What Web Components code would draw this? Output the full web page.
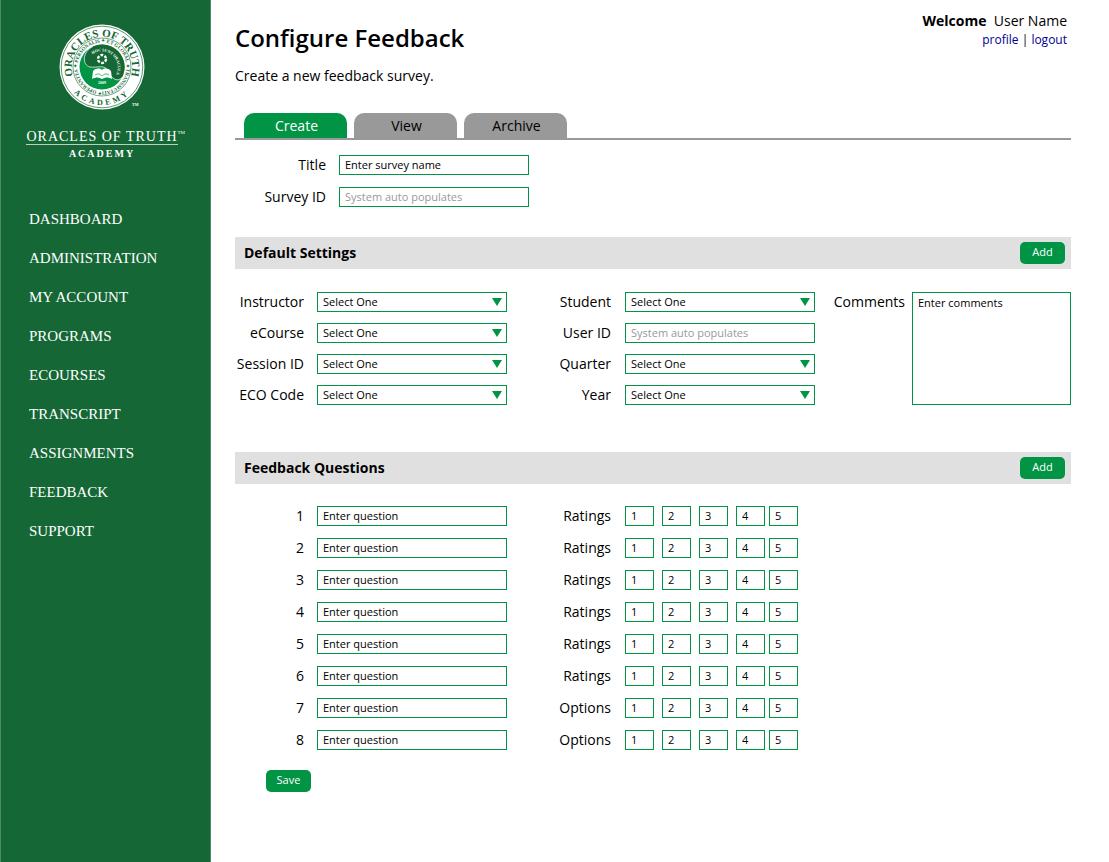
<!DOCTYPE html>
<html lang="en">
<head>
<meta charset="utf-8">
<meta name="viewport" content="width=device-width, initial-scale=1">
<title>Configure Feedback</title>
<style>
  :root {
    --green: #009444;
    --dark-green: #156735;
    --grey: #999;
    --bar: #e0e0e0;
  }
  body { margin: 0; background: #fff; color: #000; font: 14px/20px "Open Sans", "Noto Sans", sans-serif; }
</style>
</head>
<body>
<feedback-app></feedback-app>

<script>
const define = (name, render, setup) => customElements.define(name, class extends HTMLElement {
  connectedCallback() {
    if (this.shadowRoot) return;
    const root = this.attachShadow({ mode: "open" });
    root.innerHTML = render(this);
    if (setup) setup(root, this);
  }
});

const controlStyle = `
  input, select, textarea {
    box-sizing: border-box; margin: 0; width: 100%; height: 20px; padding: 0 5px;
    border: 1px solid var(--green); border-radius: 0; background: #fff; color: #000;
    font: 11px/18px "Open Sans", "Noto Sans", sans-serif; appearance: none; outline: none; display: block;
  }
  input { padding-bottom: 2px; }
  input:focus-visible, select:focus-visible, textarea:focus-visible { box-shadow: 0 0 0 2px #00944455; }
  ::placeholder { color: #000; opacity: 1; }
  :disabled { background: #fff; }
  :disabled::placeholder { color: #999; }
`;

define("academy-emblem", () => `
  <style>
    :host { display: block; width: 86px; height: 86px; }
    svg { display: block; overflow: visible; }
    text { font-family: "Liberation Serif", serif; font-weight: bold; fill: var(--dark-green); }
  </style>
  <svg width="86" height="86" viewBox="-43 -43 86 86" role="img" aria-label="Oracles of Truth Academy seal">
    <defs>
      <path id="top" d="M-28.5 10 A30.2 30.2 0 1 1 28.5 10"/>
      <path id="low" d="M-38 0 A38 38 0 0 0 38 0"/>
      <path id="ring" d="M0 24.5 A24.5 24.5 0 0 1 0 -24.5 A24.5 24.5 0 0 1 0 24.5"/>
      <path id="inner" d="M-14 -8 A16 16 0 1 1 10 12.5"/>
    </defs>
    <circle r="42.5" fill="#fff"/>
    <circle r="40.8" fill="none" stroke="#156735" stroke-width=".7"/>
    <circle r="29" fill="none" stroke="#156735" stroke-width=".6"/>
    <circle r="22.5" fill="#009444"/>
    <path fill="#156735" d="M-9 -20.6 A22.5 22.5 0 0 1 20 10.5 C15 16 9 11 6 4 C3 -3 -5 1 -12 0 C-20 -2 -20 -15 -9 -20.6Z"/>
    <path fill="none" stroke="#fff" stroke-width=".7" d="M-9 -20.6 C-20 -15 -20 -2 -12 0 C-5 1 3 -3 6 4 C9 11 15 16 20 10.5"/>
    <circle cy="-8" r="4" fill="none" stroke="#fff" stroke-width="2.4" stroke-dasharray="2.8 1.4"/>
    <path fill="#fff" d="M-9 4 C-6 1 -2 1 0 3 C2 1 6 1 9 4 L10 12 C6 10 3 10 0 12 C-3 10 -6 10 -10 12Z"/>
    <path stroke="#009444" stroke-width=".7" fill="none" d="M-7 8 C-4 6 -2 7 0 9 C2 7 4 6 7 8"/>
    <text font-size="11" text-anchor="middle"><textPath href="#top" startOffset="50%">ORACLES OF TRUTH</textPath></text>
    <text font-size="8" text-anchor="middle" letter-spacing="3"><textPath href="#low" startOffset="50%">ACADEMY</textPath></text>
    <text font-size="5"><textPath href="#ring">✦ OPERANTES ✦ PERSONALIS ✦ ET GLOBAL ✦ TRANSMUTATIO</textPath></text>
    <text font-size="4" text-anchor="middle" style="fill:#fff"><textPath href="#inner" startOffset="50%">HOC SUNT ORACULA</textPath></text>
    <text x="0" y="17" font-size="4" text-anchor="middle" style="fill:#fff">2009</text>
    <text x="30" y="39" font-size="4" style="fill:#fff">TM</text>
  </svg>`);

define("academy-logo", () => `
  <style>
    :host { display: flex; flex-direction: column; align-items: center; color: #fff;
      font-family: "Liberation Serif", serif; }
    .name { position: relative; margin-top: 19px; border-bottom: 1px solid #b9d1c2; font-size: 14px; line-height: 15px; letter-spacing: 1px; white-space: nowrap; }
    sup { position: absolute; left: 100%; top: 0; font-size: 5px; line-height: 8px; letter-spacing: 0; }
    .sub { margin-top: 3px; font-size: 10px; line-height: 12px; letter-spacing: 2px; font-weight: bold; }
  </style>
  <academy-emblem></academy-emblem>
  <div class="name">ORACLES OF TRUTH<sup>TM</sup></div>
  <div class="sub">ACADEMY</div>`);

define("side-nav", () => `
  <style>
    :host { display: block; box-sizing: border-box; width: 211px; padding: 24px 0; background: var(--dark-green);
      border: solid #4b8c64; border-width: 0 1px; }
    academy-logo { padding-right: 7px; }
    nav { display: flex; flex-direction: column; gap: 19px; margin-top: 49px; padding-left: 28px; }
    a { color: #fff; text-decoration: none; font: 15px/20px "Liberation Serif", serif; align-self: flex-start; }
    a:hover { text-decoration: underline; }
  </style>
  <academy-logo></academy-logo>
  <nav aria-label="Main">${["DASHBOARD","ADMINISTRATION","MY ACCOUNT","PROGRAMS","ECOURSES","TRANSCRIPT","ASSIGNMENTS","FEEDBACK","SUPPORT"]
    .map(t => `<a href="#${t.toLowerCase().replace(" ", "-")}">${t}</a>`).join("")}</nav>`);

define("page-header", () => `
  <style>
    :host { display: flex; justify-content: space-between; align-items: flex-start; }
    h1 { margin: 22px 0 0; font-size: 24px; line-height: 32px; font-weight: 600; }
    p { margin: 12px 0 0; }
    .user { padding: 11px 4px 0 0; text-align: right; white-space: pre; }
    .links { font-size: 12px; line-height: 18px; }
    a { color: #00008f; text-decoration: none; }
  </style>
  <div><h1><slot name="title"></slot></h1><p><slot></slot></p></div>
  <div class="user"><div><b>Welcome</b>  User Name</div><div class="links"><a href="#profile">profile</a> | <a href="#logout">logout</a></div></div>`);

define("tab-bar", () => `
  <style>
    :host { display: flex; gap: 7px; padding-left: 9px; border-bottom: 2px solid var(--grey); }
    button { width: 103px; height: 25px; margin: 0; padding: 0 0 0 2px; border: 0; border-radius: 10px 10px 0 0;
      background: var(--grey); color: #000; font: inherit; line-height: 25px; }
    button[aria-selected=true] { background: var(--green); color: #fff; }
  </style>
  <button role="tab" aria-selected="true">Create</button>
  <button role="tab" aria-selected="false">View</button>
  <button role="tab" aria-selected="false">Archive</button>`,
  (root, host) => {
    host.setAttribute("role", "tablist");
    root.addEventListener("click", e => {
      const tab = e.target.closest("button");
      if (tab) root.querySelectorAll("button").forEach(b => b.setAttribute("aria-selected", b === tab));
    });
  });

define("action-button", () => `
  <style>
    :host { display: block; }
    button { display: block; width: 45px; height: 22px; padding: 0 0 2px; border: 0; border-radius: 5px;
      background: var(--green); color: #fff; font: inherit; font-size: 11px; line-height: 20px; font-weight: normal; }
    button:hover { background: #007c39; }
  </style>
  <button type="button"><slot></slot></button>`);

define("section-bar", () => `
  <style>
    :host { display: flex; justify-content: space-between; align-items: center; height: 32px; padding: 0 6px 0 9px; background: var(--bar); }
    h2 { margin: 0; font-size: 14px; line-height: 20px; }
  </style>
  <h2><slot></slot></h2><action-button>Add</action-button>`);

define("form-field", host => {
  const type = host.getAttribute("type") || "text";
  const hint = host.getAttribute("hint") || "";
  const control = {
    text: `<input id="c" type="text" placeholder="${hint}">`,
    auto: `<input id="c" type="text" placeholder="${hint}" disabled>`,
    select: `<select id="c"><option>Select One</option></select><svg width="10" height="8" aria-hidden="true"><path fill="#009444" d="M0 0H10L5 8Z"/></svg>`,
    area: `<textarea id="c" placeholder="${hint}"></textarea>`
  }[type];
  return `
  <style>
    :host { display: grid; grid-template-columns: var(--label, 69px) minmax(0, 1fr); column-gap: var(--gap, 13px); }
    label { display: flex; justify-content: flex-end; line-height: 20px; white-space: nowrap; font-weight: var(--label-weight, 500); }
    .box { position: relative; }
    svg { position: absolute; right: 5px; top: 6px; pointer-events: none; }
    ${controlStyle}
    textarea { height: 113px; padding-top: 1px; resize: none; }
  </style>
  <label for="c"><slot></slot></label><div class="box">${control}</div>`;
});

define("rating-group", () => `
  <style>
    :host { display: grid; grid-template-columns: var(--label, 104px) 1fr; column-gap: var(--gap, 14px); }
    .label { text-align: right; line-height: 20px; }
    .boxes { display: grid; grid-template-columns: 37px 37px 37px 33px 29px; }
    ${controlStyle}
    input { width: 29px; }
  </style>
  <span class="label" id="l"><slot></slot></span>
  <div class="boxes" role="group" aria-labelledby="l">${[1,2,3,4,5].map(n => `<input type="text" aria-label="Choice ${n}" value="${n}">`).join("")}</div>`);

const columns = `
  .columns { display: grid; grid-template-columns: 272fr 308fr 256fr; }
  .col { display: grid; align-content: start; }
  .mid { --label: 104px; --gap: 14px; --label-weight: 400; }
`;

define("default-settings", () => `
  <style>
    :host { display: block; }
    ${columns}
    .columns { padding-top: 23px; }
    .col { row-gap: 11px; }
    .end { --label: 90px; --gap: 7px; --label-weight: 400; }
  </style>
  <section-bar>Default Settings</section-bar>
  <div class="columns">
    <div class="col">
      <form-field type="select">Instructor</form-field>
      <form-field type="select">eCourse</form-field>
      <form-field type="select">Session ID</form-field>
      <form-field type="select">ECO Code</form-field>
    </div>
    <div class="col mid">
      <form-field type="select">Student</form-field>
      <form-field type="auto" hint="System auto populates">User ID</form-field>
      <form-field type="select">Quarter</form-field>
      <form-field type="select">Year</form-field>
    </div>
    <div class="col end"><form-field type="area" hint="Enter comments">Comments</form-field></div>
  </div>`);

define("feedback-questions", () => `
  <style>
    :host { display: block; }
    ${columns}
    .columns { padding-top: 22px; }
    .col { row-gap: 12px; }
  </style>
  <section-bar>Feedback Questions</section-bar>
  <div class="columns">
    <div class="col">${[1,2,3,4,5,6,7,8].map(n => `<form-field hint="Enter question">${n}</form-field>`).join("")}</div>
    <div class="col mid">${[1,2,3,4,5,6,7,8].map(n => `<rating-group>${n > 6 ? "Options" : "Ratings"}</rating-group>`).join("")}</div>
  </div>`);

define("feedback-app", () => `
  <style>
    :host { display: flex; min-height: 100vh; }
    side-nav { flex: none; }
    main { flex: 1; min-width: 0; padding: 0 38px 24px 24px; }
    tab-bar { margin-top: 27px; }
    .survey { display: grid; row-gap: 12px; width: 294px; margin-top: 15px; --label: 91px; }
    default-settings { margin-top: 30px; }
    feedback-questions { margin-top: 47px; }
    .save { margin: 20px 0 0 31px; }
  </style>
  <side-nav></side-nav>
  <main>
    <page-header><span slot="title">Configure Feedback</span>Create a new feedback survey.</page-header>
    <tab-bar></tab-bar>
    <div class="survey">
      <form-field hint="Enter survey name">Title</form-field>
      <form-field type="auto" hint="System auto populates">Survey ID</form-field>
    </div>
    <default-settings></default-settings>
    <feedback-questions></feedback-questions>
    <action-button class="save">Save</action-button>
  </main>`);
</script>
</body>
</html>
